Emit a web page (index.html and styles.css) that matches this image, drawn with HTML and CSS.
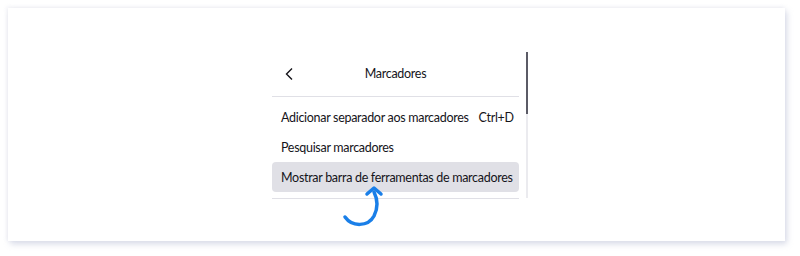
FILE: index.html
```html
<!DOCTYPE html>
<html lang="pt">
  <head>
    <meta charset="UTF-8" />
    <title>Marcadores</title>
    <link rel="stylesheet" href="styles.css">
  </head>
  <body>
    <div class="card">
      <div class="panel-wrap">
        <div class="panel">
          <div class="panel-header">
            <span class="back">
              <svg width="12" height="14" viewBox="0 0 12 14">
                <path d="M8 1.5 L2.5 7 L8 12.5" fill="none" stroke="#15141a" stroke-width="1.4" />
              </svg>
            </span>
            <span class="title">Marcadores</span>
          </div>
          <div class="separator"></div>
          <div class="menu-item">
            <span>Adicionar separador aos marcadores</span>
            <span class="shortcut">Ctrl+D</span>
          </div>
          <div class="menu-item">
            <span>Pesquisar marcadores</span>
          </div>
          <div class="menu-item highlight">
            <span>Mostrar barra de ferramentas de marcadores</span>
          </div>
          <div class="separator"></div>
          <svg class="pointer" width="50" height="50" viewBox="0 0 50 50">
            <path d="M3 33 C10 43 26 43 32 32 C36 24 36 16 32 8" fill="none" stroke="#1a7fe8" stroke-width="3.5" stroke-linecap="round" />
            <path d="M25 10 L32 4 L39 10" fill="none" stroke="#1a7fe8" stroke-width="3.5" stroke-linecap="round" stroke-linejoin="round" />
          </svg>
        </div>
        <div class="scrollbar">
          <div class="thumb"></div>
        </div>
      </div>
    </div>
  </body>
</html>
```

FILE: styles.css
```css
body {
  margin: 0;
  background-color: #ffffff;
  font-family: "Lato", "Open Sans", sans-serif;
  color: #15141a;
}
.card {
  margin: 8px 15px 15px 8px;
  height: 233px;
  background-color: #ffffff;
  box-shadow: 2px 3px 6px rgba(200, 204, 222, 0.7), -1px -1px 4px rgba(220, 220, 230, 0.4);
  display: flex;
  justify-content: center;
}
.panel-wrap {
  display: flex;
  margin-left: 7px;
}
.panel {
  position: relative;
  width: 247px;
  padding-top: 48px;
}
.panel-header {
  position: relative;
  display: flex;
  justify-content: center;
  align-items: center;
  height: 34px;
}
.back {
  position: absolute;
  left: 12px;
  top: 9px;
}
.title {
  font-size: 12.5px;
  letter-spacing: -0.3px;
}
.separator {
  height: 1px;
  background-color: #e0e0e6;
  margin: 6px 0 5px;
}
.menu-item {
  display: flex;
  justify-content: space-between;
  align-items: center;
  height: 30px;
  padding: 0 8px 0 9px;
  font-size: 12.5px;
  letter-spacing: -0.3px;
  white-space: nowrap;
  border-radius: 4px;
}
.menu-item.highlight {
  background-color: #e0e0e6;
}
.shortcut {
  margin-left: 10px;
}
.pointer {
  position: absolute;
  left: 70px;
  top: 176px;
}
.scrollbar {
  width: 2px;
  margin-left: 7px;
  margin-top: 44px;
  height: 146px;
  background-color: #ebebef;
}
.thumb {
  height: 62px;
  background-color: #5b5b66;
}
```
